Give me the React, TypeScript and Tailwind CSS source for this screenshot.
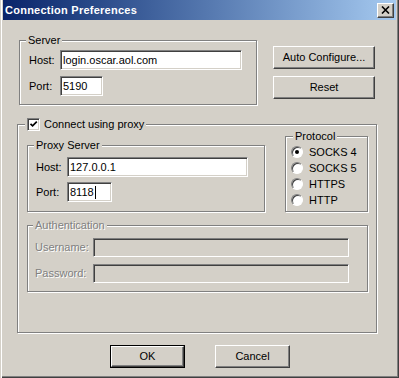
import type { ReactNode } from "react";

/* Win2k-style "Connection Preferences" dialog, 399 x 378. */

const sunken =
  "border border-t-[#808080] border-l-[#808080] border-b-white border-r-white shadow-[inset_1px_1px_0_#404040,inset_-1px_-1px_0_#d4d0c8]";
const raised =
  "border border-t-white border-l-white border-b-[#404040] border-r-[#404040] shadow-[inset_-1px_-1px_0_#808080]";
const etched = "border border-[#808080] shadow-[inset_1px_1px_0_#fff,1px_1px_0_#fff]";
const disabledText = "text-[#808080] [text-shadow:1px_1px_0_#fff]";

function Group({
  label,
  className = "",
  labelClass = "",
  children,
}: {
  label: ReactNode;
  className?: string;
  labelClass?: string;
  children?: ReactNode;
}) {
  return (
    <div className={`relative shrink-0 ${etched} ${className}`}>
      <div className={`absolute -top-[7px] h-[13px] bg-[#d4d0c8] px-[2px] leading-[13px] ${labelClass}`}>
        {label}
      </div>
      {children}
    </div>
  );
}

function Field({
  value,
  width,
  height = 20,
  disabled = false,
  caret = false,
}: {
  value?: string;
  width: number;
  height?: number;
  disabled?: boolean;
  caret?: boolean;
}) {
  return (
    <div
      className={`flex items-center pl-[2px] ${sunken} ${disabled ? "bg-[#d4d0c8]" : "bg-white"}`}
      style={{ width, height }}
    >
      <span className="leading-none">{value}</span>
      {caret && <span className="ml-[1px] inline-block h-[13px] w-[1px] bg-black" />}
    </div>
  );
}

function Button({ label, isDefault = false, className = "" }: { label: string; isDefault?: boolean; className?: string }) {
  const face = (
    <div className={`flex h-full w-full items-center justify-center ${raised}`}>{label}</div>
  );
  return (
    <div className={`shrink-0 ${isDefault ? "border border-black" : ""} ${className}`}>{face}</div>
  );
}

function Radio({ label, checked = false }: { label: string; checked?: boolean }) {
  return (
    <div className="flex h-[16px] items-center gap-[6px]">
      <div className="relative h-[12px] w-[12px] rounded-full border border-t-[#808080] border-l-[#808080] border-b-white border-r-white bg-white shadow-[inset_1px_1px_0_#404040]">
        {checked && (
          <div className="absolute left-[3px] top-[3px] h-[4px] w-[4px] rounded-full bg-black" />
        )}
      </div>
      <span>{label}</span>
    </div>
  );
}

export default function App() {
  return (
    <div
      className="h-[378px] w-[399px] overflow-hidden bg-[#d4d0c8] px-[3px] text-[11px] leading-[13px] text-black shadow-[inset_1px_0_0_#d4d0c8,inset_2px_0_0_#fff,inset_-1px_-1px_0_#404040,inset_-2px_-2px_0_#808080]"
      style={{ fontFamily: '"Liberation Sans", Arial, sans-serif' }}
    >
      {/* Title bar */}
      <div className="flex h-[20px] items-center justify-between bg-gradient-to-r from-[#0a246a] to-[#a6caf0] pl-[2px] pr-[2px]">
        <span className="text-[11px] font-bold tracking-[0.25px] text-white">Connection Preferences</span>
        <div className={`flex h-[15px] w-[17px] items-center justify-center bg-[#d4d0c8] ${raised}`}>
          <svg width="9" height="8" viewBox="0 0 9 8">
            <path d="M1 0.5 L8 7.5 M8 0.5 L1 7.5" stroke="#000" strokeWidth="1.6" />
          </svg>
        </div>
      </div>

      {/* Server + side buttons */}
      <div className="mt-[20px] flex items-start">
        <Group label="Server" className="ml-[16px] h-[65px] w-[238px]" labelClass="left-[6px]">
          <div className="pl-[9px] pt-[9px]">
            <div className="flex items-center">
              <span className="w-[31px]">Host:</span>
              <Field value="login.oscar.aol.com" width={182} />
            </div>
            <div className="mt-[6px] flex items-center">
              <span className="w-[31px]">Port:</span>
              <Field value="5190" width={43} />
            </div>
          </div>
        </Group>
        <div className="ml-[16px] mt-[6px] flex w-[102px] flex-col">
          <Button label="Auto Configure..." className="h-[23px]" />
          <Button label="Reset" className="mt-[7px] h-[23px]" />
        </div>
      </div>

      {/* Proxy */}
      <Group
        className="ml-[14px] mt-[19px] h-[209px] w-[360px]"
        labelClass="left-[7px] flex items-center gap-[4px]"
        label={
          <>
            <div className={`flex h-[13px] w-[13px] items-center justify-center bg-white ${sunken}`}>
              <svg width="9" height="9" viewBox="0 0 9 9">
                <path d="M1.5 3.8 L3.6 5.9 L7.8 1.7" stroke="#000" strokeWidth="1.7" fill="none" />
              </svg>
            </div>
            <span>Connect using proxy</span>
          </>
        }
      >
        <div className="pl-[9px] pt-[11px]">
          <div className="flex items-start">
            <Group label="Proxy Server" className="mt-[9px] h-[67px] w-[238px]" labelClass="left-[6px]">
              <div className="pl-[8px] pt-[11px]">
                <div className="flex items-center">
                  <span className="w-[31px]">Host:</span>
                  <Field value="127.0.0.1" width={181} />
                </div>
                <div className="mt-[5px] flex items-center">
                  <span className="w-[31px]">Port:</span>
                  <Field value="8118" width={45} caret />
                </div>
              </div>
            </Group>
            <Group label="Protocol" className="ml-[20px] h-[76px] w-[83px]" labelClass="left-[7px]">
              <div className="pl-[5px] pt-[7px]">
                <Radio label="SOCKS 4" checked />
                <Radio label="SOCKS 5" />
                <Radio label="HTTPS" />
                <Radio label="HTTP" />
              </div>
            </Group>
          </div>

          <Group
            label={<span className={disabledText}>Authentication</span>}
            className="mt-[13px] h-[67px] w-[341px]"
            labelClass="left-[5px]"
          >
            <div className="pl-[7px] pt-[12px]">
              <div className="flex items-center">
                <span className={`w-[58px] ${disabledText}`}>Username:</span>
                <Field width={256} height={19} disabled />
              </div>
              <div className="mt-[7px] flex items-center">
                <span className={`w-[58px] ${disabledText}`}>Password:</span>
                <Field width={256} height={19} disabled />
              </div>
            </div>
          </Group>
        </div>
      </Group>

      {/* Dialog buttons */}
      <div className="mt-[12px] flex">
        <Button label="OK" isDefault className="ml-[107px] h-[23px] w-[75px]" />
        <Button label="Cancel" className="ml-[30px] h-[23px] w-[75px]" />
      </div>
    </div>
  );
}
